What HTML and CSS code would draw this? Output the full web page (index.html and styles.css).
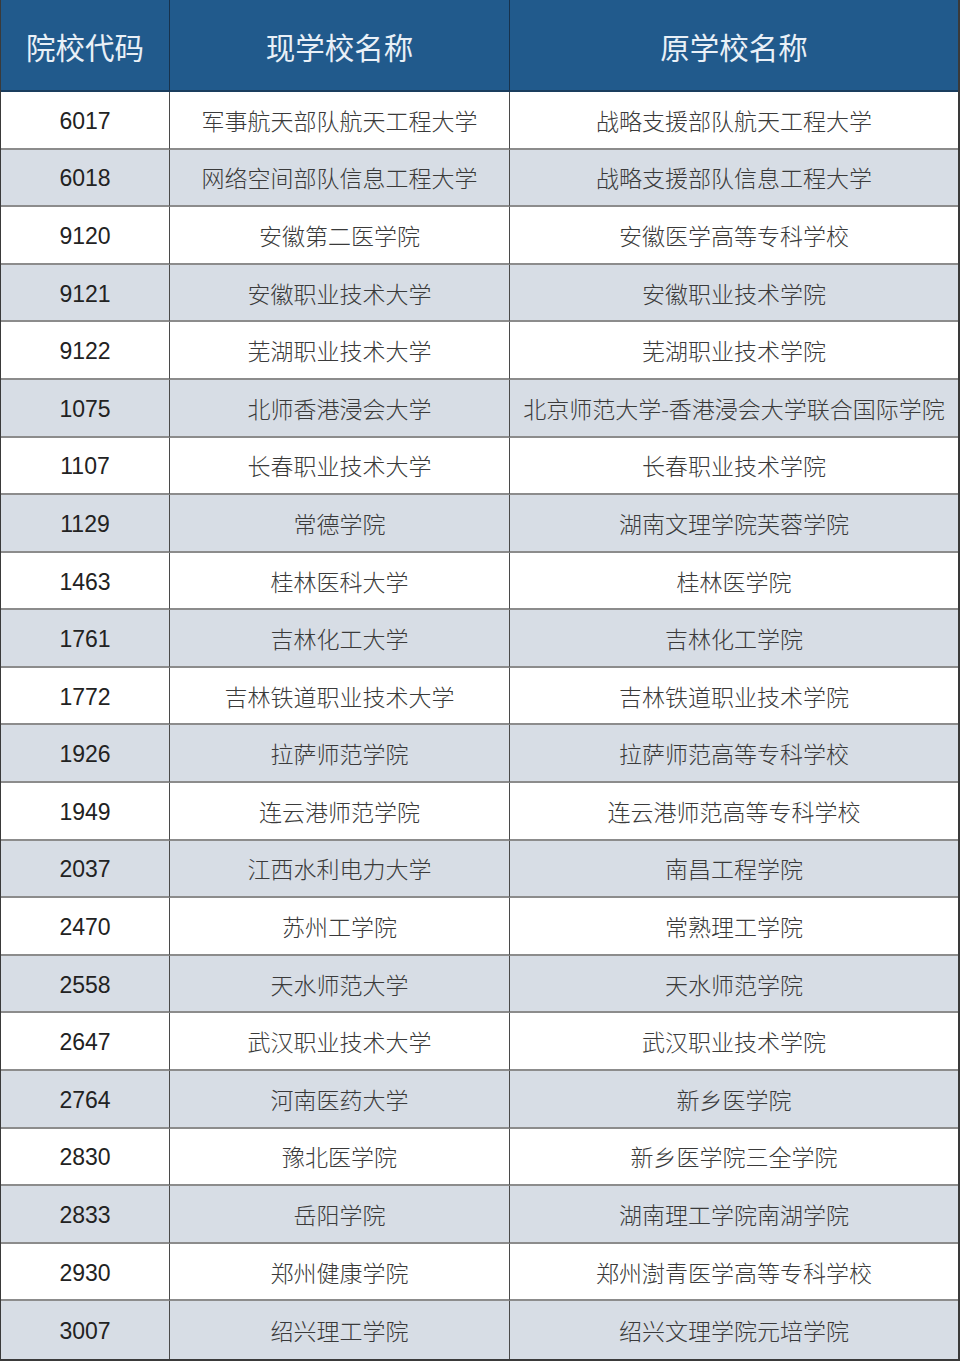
FILE: index.html
```html
<!DOCTYPE html>
<html lang="zh-CN">
<head>
<meta charset="utf-8">
<title>院校名称变更</title>
<link rel="stylesheet" href="styles.css">
</head>
<body>
<div class="table">
  <div class="row head"><div class="cell c1">院校代码</div><div class="cell c2">现学校名称</div><div class="cell c3">原学校名称</div></div>
  <div class="row"><div class="cell c1 num">6017</div><div class="cell c2">军事航天部队航天工程大学</div><div class="cell c3">战略支援部队航天工程大学</div></div>
  <div class="row alt"><div class="cell c1 num">6018</div><div class="cell c2">网络空间部队信息工程大学</div><div class="cell c3">战略支援部队信息工程大学</div></div>
  <div class="row"><div class="cell c1 num">9120</div><div class="cell c2">安徽第二医学院</div><div class="cell c3">安徽医学高等专科学校</div></div>
  <div class="row alt"><div class="cell c1 num">9121</div><div class="cell c2">安徽职业技术大学</div><div class="cell c3">安徽职业技术学院</div></div>
  <div class="row"><div class="cell c1 num">9122</div><div class="cell c2">芜湖职业技术大学</div><div class="cell c3">芜湖职业技术学院</div></div>
  <div class="row alt"><div class="cell c1 num">1075</div><div class="cell c2">北师香港浸会大学</div><div class="cell c3">北京师范大学-香港浸会大学联合国际学院</div></div>
  <div class="row"><div class="cell c1 num">1107</div><div class="cell c2">长春职业技术大学</div><div class="cell c3">长春职业技术学院</div></div>
  <div class="row alt"><div class="cell c1 num">1129</div><div class="cell c2">常德学院</div><div class="cell c3">湖南文理学院芙蓉学院</div></div>
  <div class="row"><div class="cell c1 num">1463</div><div class="cell c2">桂林医科大学</div><div class="cell c3">桂林医学院</div></div>
  <div class="row alt"><div class="cell c1 num">1761</div><div class="cell c2">吉林化工大学</div><div class="cell c3">吉林化工学院</div></div>
  <div class="row"><div class="cell c1 num">1772</div><div class="cell c2">吉林铁道职业技术大学</div><div class="cell c3">吉林铁道职业技术学院</div></div>
  <div class="row alt"><div class="cell c1 num">1926</div><div class="cell c2">拉萨师范学院</div><div class="cell c3">拉萨师范高等专科学校</div></div>
  <div class="row"><div class="cell c1 num">1949</div><div class="cell c2">连云港师范学院</div><div class="cell c3">连云港师范高等专科学校</div></div>
  <div class="row alt"><div class="cell c1 num">2037</div><div class="cell c2">江西水利电力大学</div><div class="cell c3">南昌工程学院</div></div>
  <div class="row"><div class="cell c1 num">2470</div><div class="cell c2">苏州工学院</div><div class="cell c3">常熟理工学院</div></div>
  <div class="row alt"><div class="cell c1 num">2558</div><div class="cell c2">天水师范大学</div><div class="cell c3">天水师范学院</div></div>
  <div class="row"><div class="cell c1 num">2647</div><div class="cell c2">武汉职业技术大学</div><div class="cell c3">武汉职业技术学院</div></div>
  <div class="row alt"><div class="cell c1 num">2764</div><div class="cell c2">河南医药大学</div><div class="cell c3">新乡医学院</div></div>
  <div class="row"><div class="cell c1 num">2830</div><div class="cell c2">豫北医学院</div><div class="cell c3">新乡医学院三全学院</div></div>
  <div class="row alt"><div class="cell c1 num">2833</div><div class="cell c2">岳阳学院</div><div class="cell c3">湖南理工学院南湖学院</div></div>
  <div class="row"><div class="cell c1 num">2930</div><div class="cell c2">郑州健康学院</div><div class="cell c3">郑州澍青医学高等专科学校</div></div>
  <div class="row alt"><div class="cell c1 num">3007</div><div class="cell c2">绍兴理工学院</div><div class="cell c3">绍兴文理学院元培学院</div></div>
</div>
</body>
</html>
```
FILE: styles.css
```css
html, body {
  margin: 0;
  padding: 0;
  background: #ffffff;
}
.table {
  width: 960px;
  height: 1361px;
  box-sizing: border-box;
  display: grid;
  grid-template-columns: 169px 340px 1fr;
  grid-template-rows: 92px repeat(22, 1fr);
  border-left: 1px solid #3a3a3a;
  border-right: 2px solid #3a3a3a;
  border-bottom: 2px solid #3a3a3a;
  font-family: "Noto Sans CJK SC", "Liberation Sans", sans-serif;
}
.row {
  display: contents;
}
.cell {
  display: flex;
  align-items: center;
  justify-content: center;
  border-bottom: 2px solid #8c8c8c;
  border-right: 1px solid #4a4a4a;
  font-size: 23px;
  font-weight: 300;
  color: #3a3a3a;
  white-space: nowrap;
  background: #ffffff;
  box-sizing: border-box;
}
.cell.c3 {
  border-right: none;
}
.row.alt .cell {
  background: #d7dde5;
}
.row:last-child .cell {
  border-bottom: none;
}
.num {
  font-family: "Liberation Sans", Arial, sans-serif;
  font-weight: 400;
  font-size: 23px;
  color: #222222;
  padding-top: 3px;
}
.head .cell {
  background: #215a8c;
  color: #e9f0f7;
  font-size: 29.5px;
  font-weight: 400;
  border-bottom: 2px solid #1a3d5e;
  border-right: 1px solid #17324d;
  padding-top: 2px;
}
.head .cell.c3 {
  border-right: none;
}
```
